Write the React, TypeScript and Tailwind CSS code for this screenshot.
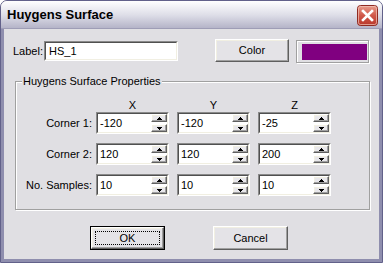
import type { ReactNode } from 'react';

const ROWS = [
  { label: 'Corner 1:', values: ['-120', '-120', '-25'] },
  { label: 'Corner 2:', values: ['120', '120', '200'] },
  { label: 'No. Samples:', values: ['10', '10', '10'] },
];

const raised =
  'border border-t-white border-l-white border-b-[#5f5f5f] border-r-[#5f5f5f] shadow-[inset_-1px_-1px_0_#a0a0a0,inset_1px_1px_0_#f1efe2]';

function Arrow({ up }: { up?: boolean }) {
  return (
    <svg width="5" height="3" viewBox="0 0 5 3" shapeRendering="crispEdges">
      {up ? (
        <>
          <rect x="2" y="0" width="1" height="1" fill="#000" />
          <rect x="1" y="1" width="3" height="1" fill="#000" />
          <rect x="0" y="2" width="5" height="1" fill="#000" />
        </>
      ) : (
        <>
          <rect x="0" y="0" width="5" height="1" fill="#000" />
          <rect x="1" y="1" width="3" height="1" fill="#000" />
          <rect x="2" y="2" width="1" height="1" fill="#000" />
        </>
      )}
    </svg>
  );
}

function SpinBtn({ up }: { up?: boolean }) {
  return (
    <div className={`flex h-[8px] items-center justify-center bg-[#e8e7eb] ${raised}`}>
      <Arrow up={up} />
    </div>
  );
}

function Sunken({ className, children }: { className?: string; children: ReactNode }) {
  return (
    <div
      className={`flex border border-t-[#8a8a8a] border-l-[#8a8a8a] border-b-white border-r-white ${className ?? ''}`}
    >
      <div className="flex flex-1 border border-t-[#505050] border-l-[#505050] border-b-[#f1efe2] border-r-[#f1efe2] bg-white">
        {children}
      </div>
    </div>
  );
}

function Spin({ value }: { value: string }) {
  return (
    <Sunken className="h-[22px] w-[73px]">
      <div className="flex flex-1 items-center pl-[2px]">{value}</div>
      <div className="flex w-[16px] flex-col justify-between">
        <SpinBtn up />
        <SpinBtn />
      </div>
    </Sunken>
  );
}

function CloseButton() {
  return (
    <svg width="21" height="21" viewBox="0 0 21 21">
      <defs>
        <linearGradient id="cl" x1="0" y1="0" x2="0" y2="1">
          <stop offset="0" stopColor="#e9a08f" />
          <stop offset="0.5" stopColor="#d0584a" />
          <stop offset="1" stopColor="#b8372b" />
        </linearGradient>
      </defs>
      <rect x="0.5" y="0.5" width="20" height="20" rx="3" fill="url(#cl)" stroke="#8f2a22" />
      <rect x="1.5" y="1.5" width="18" height="18" rx="2" fill="none" stroke="#f2c4b8" strokeOpacity="0.7" />
      <path d="M6 6 L15 15 M15 6 L6 15" stroke="#fff" strokeWidth="2.6" strokeLinecap="square" />
    </svg>
  );
}

export default function App() {
  return (
    <div className="font-['Liberation_Sans',Arial,sans-serif] text-[11px] leading-[13px] text-black">
      <div className="flex h-[263px] w-[383px] flex-col overflow-hidden rounded-t-[7px] border border-[#62618a] bg-[#e0dfe3]">
        {/* title bar */}
        <div className="flex h-[28px] items-center justify-between bg-gradient-to-b from-[#ffffff] via-[#dedee8] to-[#b2b1c6] pl-[6px] pr-[4px] shadow-[inset_0_-1px_0_#9e9db6]">
          <span className="text-[13px] font-bold leading-[16px]">Huygens Surface</span>
          <CloseButton />
        </div>

        {/* body */}
        <div className="flex flex-1 flex-col border-x-[3px] border-b-[3px] border-[#8f8eae]">
          <div className="mt-[10px] flex items-start">
            <div className="ml-[9px] mt-[2px] flex h-[20px] w-[31px] items-center">Label:</div>
            <Sunken className="mt-[2px] h-[20px] w-[134px]">
              <div className="flex flex-1 items-center pl-[3px]">HS_1</div>
            </Sunken>
            <button
              type="button"
              className={`ml-[37px] flex h-[23px] w-[74px] items-center justify-center bg-[#e4e3e7] ${raised}`}
            >
              Color
            </button>
            <div className="ml-[7px] mt-[1px] flex h-[23px] w-[73px] border border-[#a0a0a0] pb-[2px] pl-[5px] pr-[1px] pt-[3px] shadow-[1px_1px_0_#fff,inset_1px_1px_0_#fff]">
              <div className="flex-1 bg-[#800080]" />
            </div>
          </div>

          {/* group box */}
          <div className="relative ml-[11px] mt-[18px] h-[129px] w-[355px] border border-[#a0a0a0] shadow-[1px_1px_0_#fff,inset_1px_1px_0_#fff]">
            <span className="absolute left-[6px] top-[-7px] bg-[#e0dfe3] px-[1px]">Huygens Surface Properties</span>
            <div className="ml-[80px] mt-[17px] flex">
              <div className="w-[73px] text-center">X</div>
              <div className="ml-[8px] w-[73px] text-center">Y</div>
              <div className="ml-[8px] w-[73px] text-center">Z</div>
            </div>
            <div className="flex flex-col gap-[9px]">
              {ROWS.map((row) => (
                <div key={row.label} className="flex items-center">
                  <div className="w-[76px] text-right">{row.label}</div>
                  <div className="ml-[4px]">
                    <Spin value={row.values[0]} />
                  </div>
                  <div className="ml-[8px]">
                    <Spin value={row.values[1]} />
                  </div>
                  <div className="ml-[8px]">
                    <Spin value={row.values[2]} />
                  </div>
                </div>
              ))}
            </div>
          </div>

          {/* buttons */}
          <div className="ml-[86px] mt-[16px] flex gap-[48px]">
            <button type="button" className="h-[24px] w-[75px] border border-black">
              <div className={`flex h-full w-full items-center justify-center bg-[#e4e3e7] p-[3px] ${raised}`}>
                <div className="flex h-full w-full items-center justify-center border border-dotted border-black">OK</div>
              </div>
            </button>
            <button
              type="button"
              className={`flex h-[24px] w-[75px] items-center justify-center bg-[#e4e3e7] ${raised}`}
            >
              Cancel
            </button>
          </div>
        </div>
      </div>
    </div>
  );
}
